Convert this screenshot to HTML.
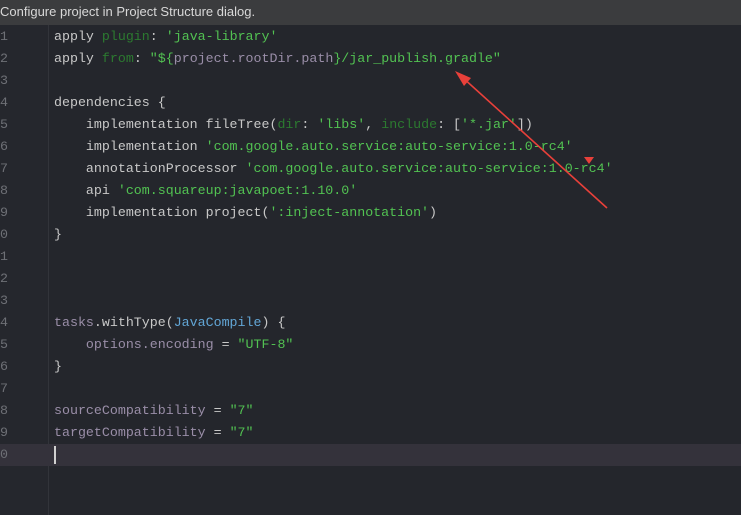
<!DOCTYPE html>
<html><head><style>
body{margin:0;width:741px;height:515px;background:#24262c;overflow:hidden;position:relative;font-family:"Liberation Mono",monospace;}
#hdr{position:absolute;left:0;top:0;width:741px;height:25px;background:#3b3c3e;color:#d8d8d8;font:13px "Liberation Sans",sans-serif;line-height:24px;padding-left:0;}
#gut{position:absolute;left:0;top:25px;width:48px;height:490px;background:#25272d;border-right:1px solid #32343a;}
#cur{position:absolute;left:0;top:444px;width:741px;height:22px;background:#34323b;}
.ln{position:absolute;left:0;color:#6e7076;font-size:13.3px;line-height:22px;}
.c{position:absolute;left:54px;color:#c8c8c8;font-size:13.3px;line-height:22px;white-space:pre;}
.s{color:#52c252}.k{color:#2c7a30}.p{color:#9a8ea8}.b{color:#62a6d6}
</style></head><body>
<div id="hdr">Configure project in Project Structure dialog.</div>
<div id="gut"></div>
<div id="cur"></div>
<div class="ln" style="top:26px">1</div><div class="ln" style="top:48px">2</div><div class="ln" style="top:70px">3</div><div class="ln" style="top:92px">4</div><div class="ln" style="top:114px">5</div><div class="ln" style="top:136px">6</div><div class="ln" style="top:158px">7</div><div class="ln" style="top:180px">8</div><div class="ln" style="top:202px">9</div><div class="ln" style="top:224px">0</div><div class="ln" style="top:246px">1</div><div class="ln" style="top:268px">2</div><div class="ln" style="top:290px">3</div><div class="ln" style="top:312px">4</div><div class="ln" style="top:334px">5</div><div class="ln" style="top:356px">6</div><div class="ln" style="top:378px">7</div><div class="ln" style="top:400px">8</div><div class="ln" style="top:422px">9</div><div class="ln" style="top:444px">0</div>
<div class="c" style="top:26px">apply <span class="k">plugin</span>: <span class="s">'java-library'</span></div>
<div class="c" style="top:48px">apply <span class="k">from</span>: <span class="s">"${</span><span class="p">project.rootDir.path</span><span class="s">}/jar_publish.gradle"</span></div>
<div class="c" style="top:92px">dependencies {</div>
<div class="c" style="top:114px">    implementation fileTree(<span class="k">dir</span>: <span class="s">'libs'</span>, <span class="k">include</span>: [<span class="s">'*.jar'</span>])</div>
<div class="c" style="top:136px">    implementation <span class="s">'com.google.auto.service:auto-service:1.0-rc4'</span></div>
<div class="c" style="top:158px">    annotationProcessor <span class="s">'com.google.auto.service:auto-service:1.0-rc4'</span></div>
<div class="c" style="top:180px">    api <span class="s">'com.squareup:javapoet:1.10.0'</span></div>
<div class="c" style="top:202px">    implementation project(<span class="s">':inject-annotation'</span>)</div>
<div class="c" style="top:224px">}</div>
<div class="c" style="top:312px"><span class="p">tasks</span>.withType(<span class="b">JavaCompile</span>) {</div>
<div class="c" style="top:334px">    <span class="p">options.encoding</span> = <span class="s">"UTF-8"</span></div>
<div class="c" style="top:356px">}</div>
<div class="c" style="top:400px"><span class="p">sourceCompatibility</span> = <span class="s">"7"</span></div>
<div class="c" style="top:422px"><span class="p">targetCompatibility</span> = <span class="s">"7"</span></div>
<div style="position:absolute;left:54px;top:446px;width:2px;height:18px;background:#d0d0d0"></div>
<svg style="position:absolute;left:0;top:0" width="741" height="515">
<line x1="607" y1="208" x2="462" y2="77" stroke="#e8403a" stroke-width="1.6"/>
<polygon points="455,71 471,78 464,86" fill="#e8403a"/>
<polygon points="584,157 594,157 589,164" fill="#e8403a"/>
</svg>
</body></html>
